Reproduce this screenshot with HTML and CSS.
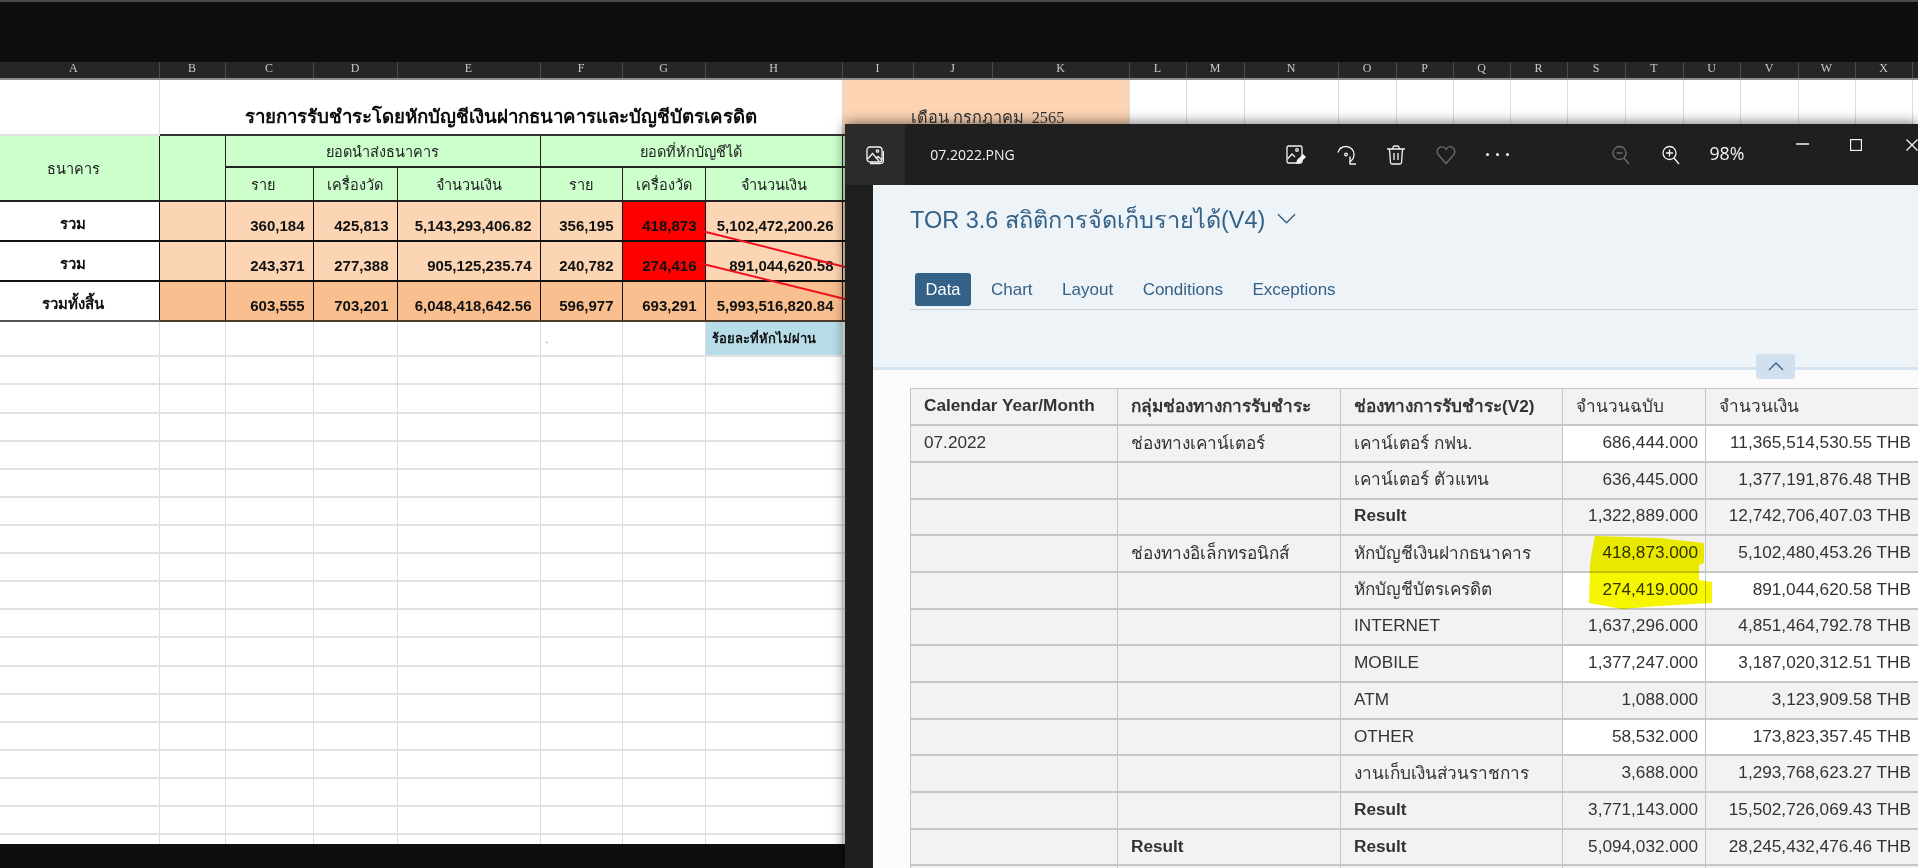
FILE: index.html
```html
<!DOCTYPE html>
<html lang="th">
<head>
<meta charset="utf-8">
<title>07.2022.PNG</title>
<link rel="stylesheet" href="styles.css">
</head>
<body>
<div class="desk">
  <div class="topband"></div>
  <div class="sheet">
    <table class="grid">
      <colgroup>
        <col class="c159"><col class="c66"><col class="c88"><col class="c84"><col class="c143"><col class="c82"><col class="c83"><col class="c137"><col class="c71"><col class="c79"><col class="c137"><col class="c57"><col class="c58"><col class="c94"><col class="c58"><col class="c57"><col class="c57"><col class="c57"><col class="c58"><col class="c58"><col class="c57"><col class="c58"><col class="c57"><col class="c57"><col class="c6">
      </colgroup>
      <thead>
        <tr class="letters"><th>A</th><th>B</th><th>C</th><th>D</th><th>E</th><th>F</th><th>G</th><th>H</th><th>I</th><th>J</th><th>K</th><th>L</th><th>M</th><th>N</th><th>O</th><th>P</th><th>Q</th><th>R</th><th>S</th><th>T</th><th>U</th><th>V</th><th>W</th><th>X</th><th></th></tr>
      </thead>
      <tbody>
        <tr class="title-row">
          <td></td>
          <td colspan="7" class="sheet-title">รายการรับชำระโดยหักบัญชีเงินฝากธนาคารและบัญชีบัตรเครดิต</td>
          <td colspan="3" class="month">เดือน กรกฎาคม&nbsp; 2565</td>
          <td></td><td></td><td></td><td></td><td></td><td></td><td></td><td></td><td></td><td></td><td></td><td></td><td></td><td></td>
        </tr>
        <tr class="head-a">
          <td rowspan="2" class="gh">ธนาคาร</td>
          <td rowspan="2" class="gh"></td>
          <td colspan="3" class="gh">ยอดนำส่งธนาคาร</td>
          <td colspan="3" class="gh">ยอดที่หักบัญชีได้</td>
          <td class="gh" colspan="17"></td>
        </tr>
        <tr class="head-b">
          <td class="gh">ราย</td><td class="gh">เครื่องวัด</td><td class="gh">จำนวนเงิน</td>
          <td class="gh">ราย</td><td class="gh">เครื่องวัด</td><td class="gh">จำนวนเงิน</td>
          <td class="gh" colspan="17"></td>
        </tr>
        <tr class="data">
          <td class="label">รวม</td><td class="pe"></td>
          <td class="pe num">360,184</td><td class="pe num">425,813</td><td class="pe num">5,143,293,406.82</td>
          <td class="pe num">356,195</td><td class="red num">418,873</td><td class="pe num">5,102,472,200.26</td>
          <td class="pe" colspan="17"></td>
        </tr>
        <tr class="data">
          <td class="label">รวม</td><td class="pe"></td>
          <td class="pe num">243,371</td><td class="pe num">277,388</td><td class="pe num">905,125,235.74</td>
          <td class="pe num">240,782</td><td class="red num">274,416</td><td class="pe num">891,044,620.58</td>
          <td class="pe" colspan="17"></td>
        </tr>
        <tr class="data">
          <td class="label total-label">รวมทั้งสิ้น</td><td class="to"></td>
          <td class="to num">603,555</td><td class="to num">703,201</td><td class="to num">6,048,418,642.56</td>
          <td class="to num">596,977</td><td class="to num">693,291</td><td class="to num">5,993,516,820.84</td>
          <td class="to" colspan="17"></td>
        </tr>
        <tr class="pct">
          <td></td><td></td><td></td><td></td><td></td><td class="dot">.</td><td></td><td class="blue">ร้อยละที่หักไม่ผ่าน</td><td colspan="17"></td>
        </tr>
        <tr class="blank"><td></td><td></td><td></td><td></td><td></td><td></td><td></td><td></td><td colspan="17"></td></tr>
        <tr class="blank"><td></td><td></td><td></td><td></td><td></td><td></td><td></td><td></td><td colspan="17"></td></tr>
        <tr class="blank"><td></td><td></td><td></td><td></td><td></td><td></td><td></td><td></td><td colspan="17"></td></tr>
        <tr class="blank"><td></td><td></td><td></td><td></td><td></td><td></td><td></td><td></td><td colspan="17"></td></tr>
        <tr class="blank"><td></td><td></td><td></td><td></td><td></td><td></td><td></td><td></td><td colspan="17"></td></tr>
        <tr class="blank"><td></td><td></td><td></td><td></td><td></td><td></td><td></td><td></td><td colspan="17"></td></tr>
        <tr class="blank"><td></td><td></td><td></td><td></td><td></td><td></td><td></td><td></td><td colspan="17"></td></tr>
        <tr class="blank"><td></td><td></td><td></td><td></td><td></td><td></td><td></td><td></td><td colspan="17"></td></tr>
        <tr class="blank"><td></td><td></td><td></td><td></td><td></td><td></td><td></td><td></td><td colspan="17"></td></tr>
        <tr class="blank"><td></td><td></td><td></td><td></td><td></td><td></td><td></td><td></td><td colspan="17"></td></tr>
        <tr class="blank"><td></td><td></td><td></td><td></td><td></td><td></td><td></td><td></td><td colspan="17"></td></tr>
        <tr class="blank"><td></td><td></td><td></td><td></td><td></td><td></td><td></td><td></td><td colspan="17"></td></tr>
        <tr class="blank"><td></td><td></td><td></td><td></td><td></td><td></td><td></td><td></td><td colspan="17"></td></tr>
        <tr class="blank"><td></td><td></td><td></td><td></td><td></td><td></td><td></td><td></td><td colspan="17"></td></tr>
        <tr class="blank"><td></td><td></td><td></td><td></td><td></td><td></td><td></td><td></td><td colspan="17"></td></tr>
        <tr class="blank"><td></td><td></td><td></td><td></td><td></td><td></td><td></td><td></td><td colspan="17"></td></tr>
        <tr class="blank"><td></td><td></td><td></td><td></td><td></td><td></td><td></td><td></td><td colspan="17"></td></tr>
        <tr class="blank"><td></td><td></td><td></td><td></td><td></td><td></td><td></td><td></td><td colspan="17"></td></tr>
      </tbody>
    </table>
    <svg class="strikes" viewBox="0 0 160 80" aria-hidden="true">
      <line x1="10" y1="6.700" x2="150" y2="42"></line>
      <line x1="4" y1="38" x2="150" y2="74"></line>
    </svg>
  </div>
  <div class="bottomband"></div>

  <section class="viewer">
    <header class="titlebar">
      <div class="appicon">
        <svg class="ico-18" viewBox="0 0 18 18"><rect x="1" y="1" width="15" height="15" rx="3"></rect><path d="M1.500 13 6.500 7.500 13 15"></path><path d="M10 12.500 12 10.500 16 14"></path><circle cx="11.500" cy="5" r="1.200"></circle><path d="M4 17.500h10c2 0 3.500-1.500 3.500-3.500V5"></path></svg>
      </div>
      <div class="filename">07.2022.PNG</div>
      <div class="tools">
        <svg class="ico-20" viewBox="0 0 20 20"><rect x="1" y="1" width="15" height="17" rx="1.500"></rect><path d="M1.500 14 6 9l3 3"></path><circle cx="11" cy="5" r="1.300"></circle><path class="fill" d="M10 19l1-4 6-6 3 3-6 6z"></path></svg>
        <svg class="ico-20" viewBox="0 0 20 20"><path d="M2 7.500C3 4 6 1.500 10 1.500c4.500 0 8 3.500 8 8 0 3.500-2 6-4.500 7.500"></path><path d="M14 11.500V19h6"></path><circle cx="10" cy="9.500" r="1.300"></circle></svg>
        <svg class="ico-20" viewBox="0 0 20 20"><path d="M1 4h18M7 4V2.500C7 1.700 7.700 1 8.500 1h3c.8 0 1.500.7 1.500 1.500V4"></path><path d="M3.500 4l1 13.500c.1.900.7 1.500 1.500 1.500h8c.8 0 1.400-.6 1.500-1.500l1-13.500"></path><path d="M8 8v7M12 8v7"></path></svg>
        <svg class="ico-20 dim" viewBox="0 0 20 20"><path d="M10 18.500 2.500 10C.5 7.500 1 4 3.500 2.500 6 1 8.500 2 10 4.500 11.500 2 14 1 16.500 2.500 19 4 19.500 7.500 17.500 10z"></path></svg>
        <div class="dots"><i></i><i></i><i></i></div>
      </div>
      <div class="zooms">
        <svg class="ico-18 dim" viewBox="0 0 18 20"><circle cx="7.500" cy="8" r="6.500"></circle><path d="M12 13l5 6M4.500 8h6"></path></svg>
        <svg class="ico-18" viewBox="0 0 18 20"><circle cx="7.500" cy="8" r="6.500"></circle><path d="M12 13l5 6M4 8h7M7.500 4.500v7"></path></svg>
        <span class="percent">98%</span>
      </div>
      <div class="winctl">
        <svg class="ico-min" viewBox="0 0 13 2"><path d="M0 1h13"></path></svg>
        <svg class="ico-max" viewBox="0 0 12 12"><rect x=".5" y=".5" width="11" height="11"></rect></svg>
        <svg class="ico-close" viewBox="0 0 12 12"><path d="M.5.500l11 11M11.500.500l-11 11"></path></svg>
      </div>
    </header>
    <div class="viewer-body">
      <aside class="strip"></aside>
      <main class="shot">
        <div class="panel">
          <h1 class="report-title">TOR 3.6 สถิติการจัดเก็บรายได้(V4)<svg class="chev" viewBox="0 0 20 11"><path d="M1 1l9 9 9-9"></path></svg></h1>
          <nav class="tabs">
            <span class="tab active">Data</span>
            <span class="tab">Chart</span>
            <span class="tab">Layout</span>
            <span class="tab">Conditions</span>
            <span class="tab">Exceptions</span>
          </nav>
          <button class="collapse" type="button" aria-label="Collapse"><svg viewBox="0 0 16 9"><path d="M1 8l7-7 7 7"></path></svg></button>
        </div>
        <div class="result-wrap">
          <table class="result">
            <colgroup><col class="r207"><col class="r223"><col class="r222"><col class="r143"><col class="r213"></colgroup>
            <thead>
              <tr><th>Calendar Year/Month</th><th>กลุ่มช่องทางการรับชำระ</th><th>ช่องทางการรับชำระ(V2)</th><th class="light">จำนวนฉบับ</th><th class="light">จำนวนเงิน</th></tr>
            </thead>
            <tbody>
              <tr class="lit"><td>07.2022</td><td>ช่องทางเคาน์เตอร์</td><td>เคาน์เตอร์ กฟน.</td><td class="n">686,444.000</td><td class="n">11,365,514,530.55 THB</td></tr>
              <tr><td></td><td></td><td>เคาน์เตอร์ ตัวแทน</td><td class="n">636,445.000</td><td class="n">1,377,191,876.48 THB</td></tr>
              <tr><td></td><td></td><td class="b">Result</td><td class="n">1,322,889.000</td><td class="n">12,742,706,407.03 THB</td></tr>
              <tr><td></td><td>ช่องทางอิเล็กทรอนิกส์</td><td>หักบัญชีเงินฝากธนาคาร</td><td class="n">418,873.000</td><td class="n">5,102,480,453.26 THB</td></tr>
              <tr class="lit"><td></td><td></td><td>หักบัญชีบัตรเครดิต</td><td class="n">274,419.000</td><td class="n">891,044,620.58 THB</td></tr>
              <tr><td></td><td></td><td>INTERNET</td><td class="n">1,637,296.000</td><td class="n">4,851,464,792.78 THB</td></tr>
              <tr class="lit"><td></td><td></td><td>MOBILE</td><td class="n">1,377,247.000</td><td class="n">3,187,020,312.51 THB</td></tr>
              <tr><td></td><td></td><td>ATM</td><td class="n">1,088.000</td><td class="n">3,123,909.58 THB</td></tr>
              <tr class="lit"><td></td><td></td><td>OTHER</td><td class="n">58,532.000</td><td class="n">173,823,357.45 THB</td></tr>
              <tr><td></td><td></td><td>งานเก็บเงินส่วนราชการ</td><td class="n">3,688.000</td><td class="n">1,293,768,623.27 THB</td></tr>
              <tr><td></td><td></td><td class="b">Result</td><td class="n">3,771,143.000</td><td class="n">15,502,726,069.43 THB</td></tr>
              <tr><td></td><td class="b">Result</td><td class="b">Result</td><td class="n">5,094,032.000</td><td class="n">28,245,432,476.46 THB</td></tr>
              <tr><td></td><td></td><td></td><td></td><td></td></tr>
            </tbody>
          </table>
          <svg class="marker" viewBox="0 0 125 75" aria-hidden="true"><path d="M7 1 71 3 116 8V28L111 30V45L124 47V68L71 71 34 74 1 68 2 32 3 22Z"></path></svg>
        </div>
      </main>
    </div>
  </section>
</div>
</body>
</html>
```
FILE: styles.css
```css
* { box-sizing: border-box; }
html, body { margin: 0; height: 100%; overflow: hidden; background: #0e0e0e; }
body { font-family: "Liberation Sans", "Noto Sans", sans-serif; }

.desk { position: relative; width: 1918px; height: 868px; display: flex; flex-direction: column; overflow: hidden; }
.topband { height: 62px; flex: none; background: #0e0e0e; border-top: 2px solid #4a4a4e; }
.sheet { position: relative; height: 782px; flex: none; overflow: hidden; background: #fff; }
.bottomband { flex: 1; background: #0e0e0e; }

/* Spreadsheet */
.grid { border-collapse: collapse; table-layout: fixed; width: 1918px; font-family: "Liberation Serif", "Noto Serif", serif; color: #111; }
.c159 { width: 159px; } .c66 { width: 66px; } .c88 { width: 88px; } .c84 { width: 84px; }
.c143 { width: 143px; } .c82 { width: 82px; } .c83 { width: 83px; } .c137 { width: 137px; }
.c71 { width: 71px; } .c79 { width: 79px; } .c57 { width: 57px; } .c58 { width: 58px; }
.c94 { width: 94px; } .c6 { width: 6px; }
.grid td { padding: 0; border: 1px solid #dcdcdc; border-bottom-width: 2px; border-bottom-color: #e2e2e2; }
.grid tr > td:first-child { border-left: 0; }

.letters th { height: 17px; padding: 0 0 3px; background: #262626; color: #c9c9c9; font-size: 12px; line-height: 13px; font-weight: 400; border-left: 1px solid #4c4c4c; border-right: 1px solid #4c4c4c; border-bottom: 2px solid #8a8a8a; overflow: hidden; }
.letters th:first-child { padding-right: 12px; border-left: 0; }
.title-row td { height: 56px; }
.grid td.sheet-title { font-size: 18.700px; font-weight: 700; text-align: center; vertical-align: bottom; padding: 0 0 3px 0; color: #0c0c0c; border-bottom: 2px solid #333; }
.grid td.month { background: #fdd5b5; font-size: 16.300px; vertical-align: top; padding: 24px 0 0 68px; border-bottom: 2px solid #333; white-space: pre; color: #333; }

.head-a td { height: 32px; }
.head-b td { height: 34px; }
.grid td.gh { background: #ccffcc; border: 1px solid #222; border-bottom-width: 2px; text-align: center; font-size: 14.500px; font-weight: 400; color: #222; }
.grid tr > td.gh:first-child { border-left: 0; padding-right: 12px; }
.data td { height: 40px; }
.grid .data td { border: 1px solid #111; border-bottom-width: 2px; vertical-align: bottom; padding-bottom: 5px; }
.grid .data td.pe { background: #fcd5b5; }
.grid .data td.to { background: #fabf8f; border-bottom-color: #4d3a28; }
.grid .data td.red { background: #ff0000; }
.num { font-family: "Liberation Sans", sans-serif; font-weight: 700; font-size: 15px; text-align: right; padding-right: 8px !important; line-height: 18px; }
.grid .data td.label { text-align: center; font-weight: 700; font-size: 15px; background: #fff; border-left: 0; padding: 0 12px 4px 0; }
.grid .data td.total-label { border-bottom-color: #555; }

.pct td { height: 35px; }
.grid td.blue { background: #b7dee8; font-weight: 700; font-size: 13px; padding-left: 6px; white-space: nowrap; color: #111; }
.grid td.dot { font-size: 11px; padding-left: 5px; vertical-align: middle; color: #666; }
.blank td { height: 28px; }
.blank:nth-child(9n) td { height: 29px; }

.strikes { position: absolute; left: 695px; top: 163px; width: 160px; height: 80px; }
.strikes line { stroke: #f0101e; stroke-width: 2; }

/* Photo viewer window */
.viewer { position: absolute; left: 845px; top: 124px; right: 0; bottom: 0; display: flex; flex-direction: column; background: #1f1f1f; box-shadow: 0 -1px 12px rgba(0,0,0,.55); color: #fff; }
.titlebar { height: 61px; flex: none; display: flex; align-items: center; position: relative; background: #1f1f1f; }
.appicon { width: 61px; height: 61px; display: flex; align-items: center; justify-content: center; background: #2b2b2b; }
.filename { margin-left: 25px; width: 360px; font: 14px "Open Sans", "Noto Sans", sans-serif; color: #f2f2f2; }
.titlebar svg { display: block; fill: none; stroke: #f4f4f4; stroke-width: 1.300; }
.ico-18 { width: 18px; height: 20px; flex: none; }
.ico-20 { width: 20px; height: 20px; flex: none; }
.titlebar svg.dim { stroke: #6e6e6e; }
.titlebar .fill { fill: #f4f4f4; stroke: none; }
.tools { display: flex; align-items: center; gap: 30px; width: 331px; }
.dots { display: flex; gap: 7px; }
.dots i { width: 3px; height: 3px; border-radius: 50%; background: #f2f2f2; }
.zooms { display: flex; align-items: center; gap: 32px; width: 186px; }
.percent { font: 17.800px "Open Sans", "Noto Sans", sans-serif; color: #f2f2f2; margin-left: -3px; margin-top: -3px; }
.winctl { display: flex; align-self: flex-start; margin-top: 15px; }
.ico-min { width: 13px; height: 2px; margin: 4px 41px 0 0; }
.titlebar svg.ico-min path { stroke: #f2f2f2; stroke-width: 1.500; }
.ico-max { width: 12px; height: 12px; margin-right: 44px; }
.ico-close { width: 12px; height: 12px; flex: none; }

.viewer-body { flex: 1; min-height: 0; display: flex; }
.strip { width: 28px; flex: none; background: #1f1f1f; }
.shot { flex: 1; min-width: 0; background: #fbfbfb; overflow: hidden; }
.panel { position: relative; height: 185px; padding: 20px 0 0 37px; background: #eef3f8; border-bottom: 3px solid #d5e3f0; }
.report-title { margin: 0; display: flex; align-items: center; font-size: 23.500px; line-height: 30px; font-weight: 400; color: #346187; }
.chev { width: 19px; height: 11px; margin: -3px 0 0 12px; fill: none; stroke: #346187; stroke-width: 1.500; }
.tabs { display: flex; align-items: center; margin-top: 38px; height: 37px; padding-bottom: 3px; padding-left: 5px; border-bottom: 1px solid #cfd3d8; font-size: 17px; color: #346187; }
.tab { line-height: 33px; }
.tab + .tab { margin-left: 29.500px; }
.tab.active { width: 56px; height: 33px; margin-right: -9.500px; text-align: center; background: #346187; color: #fff; border-radius: 3px; font-size: 16.500px; }
.collapse { position: absolute; left: 883px; top: 169px; width: 39px; height: 25px; padding: 0; border: 0; border-radius: 3px; background: #d1e0ef; display: flex; align-items: center; justify-content: center; }
.collapse svg { width: 16px; height: 9px; fill: none; stroke: #346187; stroke-width: 1.300; }

.result-wrap { position: relative; margin: 18px 0 0 37px; }
.result { border-collapse: collapse; table-layout: fixed; width: 1008px; font-size: 17.200px; color: #333; }
.r207 { width: 207px; } .r223 { width: 223px; } .r222 { width: 222px; } .r143 { width: 143px; } .r213 { width: 213px; }
.result th, .result td { height: 36.700px; padding: 0 7px 2px 13px; background: #f2f2f2; border: 1px solid #c6c6c6; border-bottom-width: 2px; text-align: left; white-space: nowrap; overflow: hidden; }
.result th { font-weight: 700; }
.result th.light { font-weight: 400; }
.result td.n { text-align: right; padding-left: 0; }
.result td.b { font-weight: 700; }
.result .lit td.n { background: #fff; }
.marker { position: absolute; left: 678px; top: 147px; width: 125px; height: 75px; mix-blend-mode: multiply; }
.marker path { fill: #f6f600; }
```
